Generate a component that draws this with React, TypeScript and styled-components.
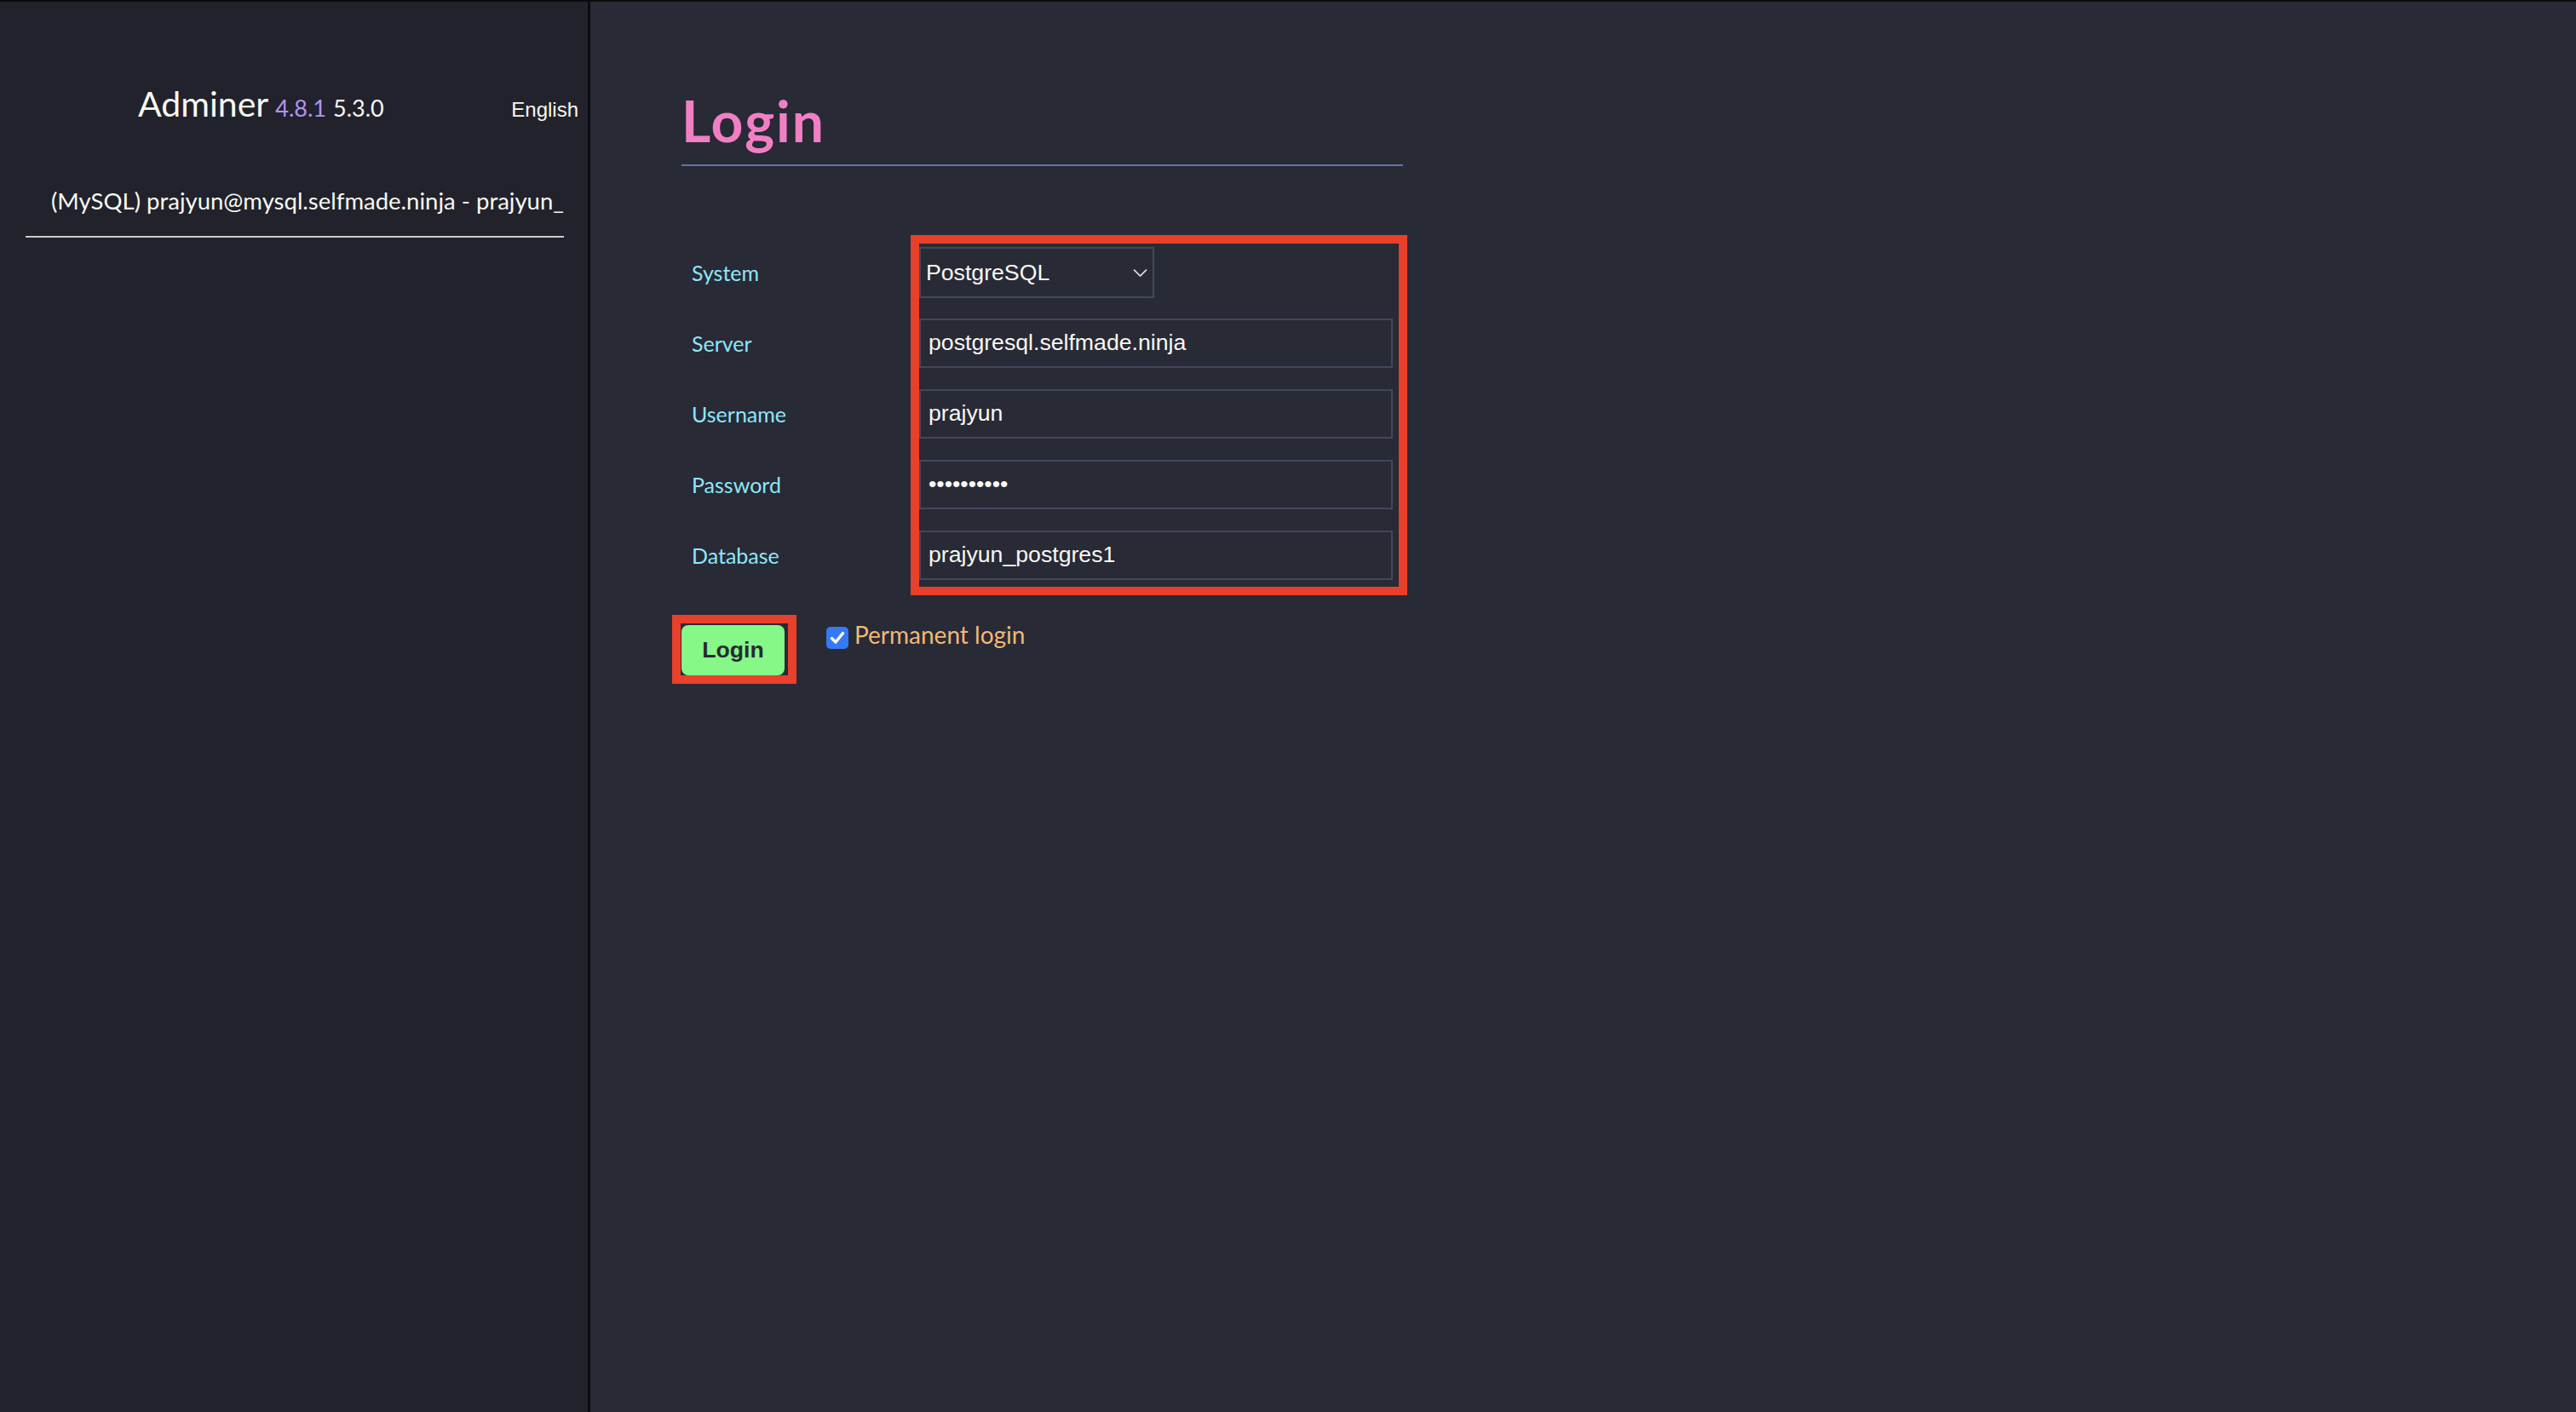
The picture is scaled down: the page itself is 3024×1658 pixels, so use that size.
import React from 'react';
import styled, { createGlobalStyle } from 'styled-components';

const GlobalStyle = createGlobalStyle`
  html, body {
    margin: 0;
    padding: 0;
    background: #282a36;
  }
  body {
    font-family: Lato, "Noto Sans", sans-serif;
    color: #f8f8f2;
  }
  * {
    box-sizing: border-box;
  }
`;

const Page = styled.div`
  display: flex;
  min-height: 100vh;
  border-top: 2px solid #0b0b0d;
`;

const Sidebar = styled.aside`
  width: 693px;
  flex-shrink: 0;
  background: #21222b;
  border-right: 3px solid #0c0c10;
  padding: 96px 11px 0 30px;
`;

const Brand = styled.div`
  display: flex;
  align-items: baseline;
  height: 48px;
  padding-left: 132px;
`;

const BrandName = styled.h1`
  margin: 0;
  font: 400 41px/48px Lato, sans-serif;
  color: #f8f8f2;
`;

const Version = styled.span<{ $accent?: boolean }>`
  margin-left: 8px;
  font: 400 27px/30px Lato, sans-serif;
  color: ${p => (p.$accent ? '#b592f0' : '#f8f8f2')};
`;

const LangSelect = styled.select`
  margin-left: auto;
  width: 100px;
  appearance: none;
  border: none;
  background: transparent;
  padding: 0;
  text-align-last: right;
  font: 400 24px/28px "Liberation Sans", Arial, sans-serif;
  color: #f8f8f2;
  outline: none;
`;

const Connection = styled.div`
  margin-top: 73px;
  padding-left: 30px;
  width: 645px;
  overflow: hidden;
  white-space: nowrap;
  font: 400 27.5px/34px Lato, sans-serif;
  color: #f8f8f2;
`;

const Rule = styled.hr`
  margin: 24px 0 0;
  width: 632px;
  height: 2px;
  border: none;
  background: #cccccc;
`;

const Main = styled.main`
  flex: 1;
  padding: 101px 0 0 107px;
`;

const Title = styled.h2`
  margin: 0;
  width: 847px;
  padding-bottom: 13px;
  border-bottom: 2px solid #6272a4;
  font: 700 66px/77px Lato, sans-serif;
  letter-spacing: 2px;
  color: #f17fc4;
`;

const FormGrid = styled.div`
  margin-top: 83px;
  display: grid;
  grid-template-columns: 269px 583px;
  grid-auto-rows: 83px;
  align-items: center;
`;

const Label = styled.label<{ $row: number }>`
  grid-column: 1;
  grid-row: ${p => p.$row};
  padding-left: 12px;
  font: 400 25px/30px Lato, sans-serif;
  color: #8fe6f8;
`;

const Field = styled.div<{ $row: number }>`
  grid-column: 2;
  grid-row: ${p => p.$row};
  display: flex;
  align-items: center;
  padding-left: 10px;
`;

const Highlight = styled.div`
  grid-column: 2;
  grid-row: 1 / span 5;
  align-self: stretch;
  margin: -2px 0 -6px;
  border: 10px solid #e8402a;
  z-index: 1;
  pointer-events: none;
`;

const controlFont = `400 26.67px "Liberation Sans", Arial, sans-serif`;

const SelectWrap = styled.span`
  position: relative;
  display: inline-flex;
  width: 276px;
  height: 60px;
`;

const SystemSelect = styled.select`
  appearance: none;
  width: 100%;
  height: 100%;
  padding: 0 30px 0 6px;
  border: 2px solid #44475a;
  border-radius: 0;
  background: #282a36;
  font: ${controlFont};
  color: #f8f8f2;
  outline: none;
`;

const Chevron = styled.svg`
  position: absolute;
  right: 8px;
  top: 50%;
  transform: translateY(-45%);
  pointer-events: none;
`;

const TextInput = styled.input`
  width: 556px;
  height: 58px;
  padding: 0 9px;
  border: 2px solid #44475a;
  border-radius: 0;
  background: #282a36;
  font: ${controlFont};
  color: #f8f8f2;
  outline: none;
`;

const Actions = styled.div`
  display: flex;
  align-items: flex-start;
  margin: 29px 0 0 -11px;
`;

const ButtonFrame = styled.span`
  display: flex;
  border: 10px solid #e8402a;
  padding: 2px 4px 0 1px;
`;

const SubmitButton = styled.button`
  width: 121px;
  height: 59px;
  border: none;
  border-radius: 8px;
  background: #86f887;
  font: 700 26.67px "Liberation Sans", Arial, sans-serif;
  color: #282a36;
  cursor: pointer;
`;

const CheckLabel = styled.label`
  display: flex;
  align-items: flex-start;
  gap: 7px;
  margin: 6px 0 0 35px;
  font: 400 28px/34px Lato, sans-serif;
  color: #f3b774;
`;

const CheckBox = styled.span`
  display: flex;
  align-items: center;
  justify-content: center;
  width: 26px;
  height: 26px;
  margin-top: 8px;
  border-radius: 5px;
  background: #3579f6;
`;

const fields = [
  { label: 'Server', value: 'postgresql.selfmade.ninja', type: 'text' },
  { label: 'Username', value: 'prajyun', type: 'text' },
  { label: 'Password', value: 'prajyun123', type: 'password' },
  { label: 'Database', value: 'prajyun_postgres1', type: 'text' },
];

const App: React.FC = () => (
  <>
    <GlobalStyle />
    <Page>
      <Sidebar>
        <Brand>
          <BrandName>Adminer</BrandName>
          <Version $accent>4.8.1</Version>
          <Version>5.3.0</Version>
          <LangSelect defaultValue="en">
            <option value="en">English</option>
            <option value="de">Deutsch</option>
            <option value="fr">Français</option>
          </LangSelect>
        </Brand>
        <Connection>(MySQL) prajyun@mysql.selfmade.ninja - prajyun_</Connection>
        <Rule />
      </Sidebar>
      <Main>
        <Title>Login</Title>
        <FormGrid>
          <Label $row={1}>System</Label>
          <Field $row={1}>
            <SelectWrap>
              <SystemSelect defaultValue="pgsql">
                <option value="server">MySQL</option>
                <option value="sqlite">SQLite</option>
                <option value="pgsql">PostgreSQL</option>
                <option value="oracle">Oracle (beta)</option>
                <option value="mssql">MS SQL</option>
              </SystemSelect>
              <Chevron width="17" height="10" viewBox="0 0 17 10">
                <path d="M1 1.2 L8.5 8.6 L16 1.2" fill="none" stroke="#dcdcdc" strokeWidth="1.8" />
              </Chevron>
            </SelectWrap>
          </Field>
          {fields.map((f, i) => (
            <React.Fragment key={f.label}>
              <Label $row={i + 2}>{f.label}</Label>
              <Field $row={i + 2}>
                <TextInput type={f.type} defaultValue={f.value} />
              </Field>
            </React.Fragment>
          ))}
          <Highlight />
        </FormGrid>
        <Actions>
          <ButtonFrame>
            <SubmitButton type="button">Login</SubmitButton>
          </ButtonFrame>
          <CheckLabel>
            <CheckBox>
              <svg width="20" height="20" viewBox="0 0 20 20">
                <path d="M3.5 10.5 L8 15 L16.5 4.5" fill="none" stroke="#ffffff" strokeWidth="3.4" strokeLinecap="round" strokeLinejoin="round" />
              </svg>
            </CheckBox>
            Permanent login
          </CheckLabel>
        </Actions>
      </Main>
    </Page>
  </>
);

export default App;
